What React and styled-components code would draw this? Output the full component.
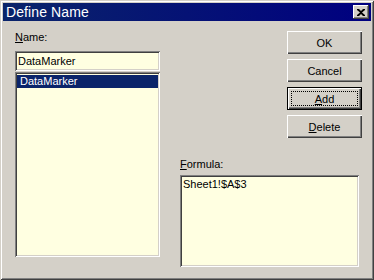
import styled, { createGlobalStyle } from "styled-components";

const Global = createGlobalStyle`
  html, body {
    margin: 0;
    padding: 0;
    background: #d4d0c8;
  }
  body {
    font-family: "Liberation Sans", Arial, sans-serif;
    font-size: 11px;
    color: #000;
  }
`;

const Window = styled.div`
  width: 374px;
  height: 280px;
  box-sizing: border-box;
  padding: 3px;
  background: #d4d0c8;
  box-shadow: inset 1px 1px #d4d0c8, inset -1px -1px #404040,
    inset 2px 2px #fff, inset -2px -2px #808080;
`;

const TitleBar = styled.div`
  height: 18px;
  display: flex;
  align-items: center;
  justify-content: space-between;
  padding: 0 2px 0 3px;
  background: linear-gradient(90deg, #0a246a, #000080);
  color: #fff;
`;

const Title = styled.span`
  font-size: 14px;
  line-height: 18px;
  letter-spacing: 0.1px;
`;

const CloseButton = styled.div`
  width: 16px;
  height: 14px;
  box-sizing: border-box;
  display: flex;
  align-items: center;
  justify-content: center;
  background: #d4d0c8;
  box-shadow: inset -1px -1px #404040, inset 1px 1px #fff,
    inset -2px -2px #808080;
`;

const Body = styled.div`
  display: grid;
  grid-template-columns: 145px 182px;
  column-gap: 20px;
  padding: 10px 0 0 12px;
`;

const Column = styled.div`
  display: flex;
  flex-direction: column;
`;

const Label = styled.div`
  height: 13px;
  line-height: 13px;
  margin-top: ${(p) => p.$top || 0}px;
  margin-bottom: ${(p) => p.$bottom || 0}px;
`;

const Key = styled.span`
  text-decoration: underline;
`;

const sunken = `
  box-sizing: border-box;
  background: #ffffe1;
  box-shadow: inset 1px 1px #808080, inset -1px -1px #fff,
    inset 2px 2px #404040, inset -2px -2px #d4d0c8;
`;

const Field = styled.div`
  ${sunken}
  height: 20px;
  padding: 3px 3px 0 3px;
  line-height: 14px;
`;

const ListBox = styled.div`
  ${sunken}
  height: 185px;
  margin-top: 1px;
  padding: 2px;
`;

const ListItem = styled.div`
  height: 13px;
  line-height: 13px;
  padding-left: 3px;
  margin-top: 1px;
  background: ${(p) => (p.$selected ? "#0a246a" : "transparent")};
  color: ${(p) => (p.$selected ? "#fff" : "#000")};
`;

const Buttons = styled.div`
  display: flex;
  flex-direction: column;
  align-items: flex-end;
  gap: 5px;
`;

const Button = styled.div`
  position: relative;
  width: 75px;
  height: 23px;
  box-sizing: border-box;
  display: flex;
  align-items: center;
  justify-content: center;
  background: #d4d0c8;
  box-shadow: ${(p) =>
    p.$default
      ? "inset 1px 1px #000, inset -1px -1px #000, inset 2px 2px #fff, inset -2px -2px #404040, inset -3px -3px #808080"
      : "inset 1px 1px #fff, inset -1px -1px #404040, inset -2px -2px #808080"};
  &::after {
    content: "";
    display: ${(p) => (p.$default ? "block" : "none")};
    position: absolute;
    inset: 4px;
    border: 1px dotted #000;
  }
`;

const FormulaBox = styled.div`
  ${sunken}
  width: 179px;
  height: 92px;
  padding: 3px 3px;
  line-height: 13px;
`;

export default function App() {
  return (
    <>
      <Global />
      <Window>
        <TitleBar>
          <Title>Define Name</Title>
          <CloseButton>
            <svg width="8" height="7" viewBox="0 0 8 7">
              <path
                d="M0 0h2l2 2 2-2h2v1L5 3.5 8 6v1H6L4 5 2 7H0V6l3-2.5L0 1z"
                fill="#000"
              />
            </svg>
          </CloseButton>
        </TitleBar>
        <Body>
          <Column>
            <Label $bottom={7}>
              <Key>N</Key>ame:
            </Label>
            <Field>DataMarker</Field>
            <ListBox>
              <ListItem $selected>DataMarker</ListItem>
            </ListBox>
          </Column>
          <Column>
            <Buttons>
              <Button>OK</Button>
              <Button>Cancel</Button>
              <Button $default>
                <span>
                  <Key>A</Key>dd
                </span>
              </Button>
              <Button>
                <span>
                  <Key>D</Key>elete
                </span>
              </Button>
            </Buttons>
            <Label $top={20} $bottom={4}>
              <Key>F</Key>ormula:
            </Label>
            <FormulaBox>Sheet1!$A$3</FormulaBox>
          </Column>
        </Body>
      </Window>
    </>
  );
}
